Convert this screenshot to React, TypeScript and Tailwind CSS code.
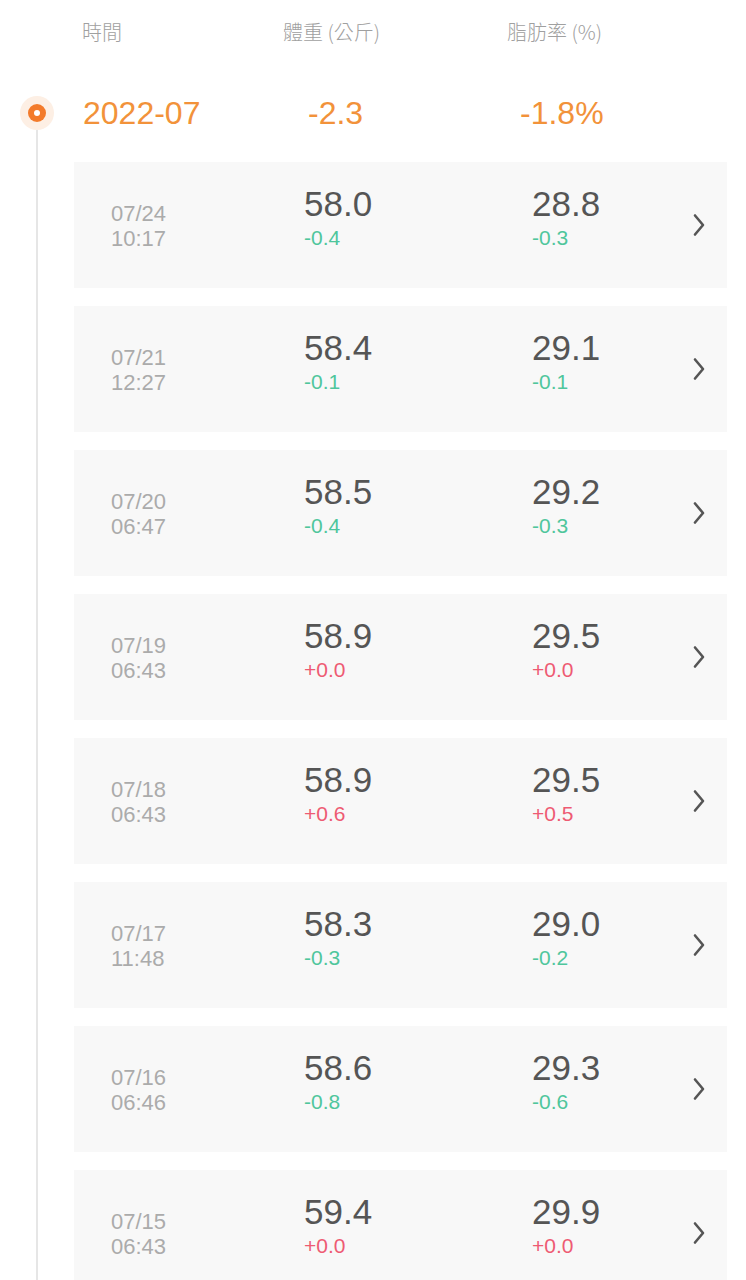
const rows = [
  { date: "07/24", time: "10:17", w: "58.0", dw: "-0.4", f: "28.8", df: "-0.3" },
  { date: "07/21", time: "12:27", w: "58.4", dw: "-0.1", f: "29.1", df: "-0.1" },
  { date: "07/20", time: "06:47", w: "58.5", dw: "-0.4", f: "29.2", df: "-0.3" },
  { date: "07/19", time: "06:43", w: "58.9", dw: "+0.0", f: "29.5", df: "+0.0" },
  { date: "07/18", time: "06:43", w: "58.9", dw: "+0.6", f: "29.5", df: "+0.5" },
  { date: "07/17", time: "11:48", w: "58.3", dw: "-0.3", f: "29.0", df: "-0.2" },
  { date: "07/16", time: "06:46", w: "58.6", dw: "-0.8", f: "29.3", df: "-0.6" },
  { date: "07/15", time: "06:43", w: "59.4", dw: "+0.0", f: "29.9", df: "+0.0" },
];

const font = { fontFamily: '"Liberation Sans", "Noto Sans CJK TC", sans-serif' };
const cjk = { fontFamily: '"Noto Sans CJK TC", sans-serif' };

function Delta({ v }: { v: string }) {
  const up = v.startsWith("+");
  return (
    <div className={`text-[21px] leading-[28px] ${up ? "text-[#ee5b73]" : "text-[#4fc69c]"}`}>{v}</div>
  );
}

function Chevron() {
  return (
    <svg width="12" height="24" viewBox="0 0 12 24" fill="none">
      <polyline points="2,2.5 10,12 2,21.5" stroke="#555" strokeWidth="2.6" strokeLinecap="round" strokeLinejoin="round" />
    </svg>
  );
}

export default function App() {
  return (
    <div className="min-h-[1280px] bg-white overflow-hidden" style={font}>
      {/* column header */}
      <div className="h-[64px] flex items-center text-[20px] text-[#a0a0a0] font-light" style={cjk}>
        <span className="w-[201px] pl-[82px] box-content">時間</span>
        <span className="w-[224px]">體重 (公斤)</span>
        <span>脂肪率 (%)</span>
      </div>

      <div className="flex">
        {/* timeline gutter */}
        <div className="w-[74px] shrink-0 flex flex-col items-center pt-[32px]">
          <div className="w-[34px] h-[34px] rounded-full bg-[#fdefe4] flex items-center justify-center">
            <div className="w-[18px] h-[18px] rounded-full bg-[#f37b2b] flex items-center justify-center">
              <div className="w-[6px] h-[6px] rounded-full bg-white" />
            </div>
          </div>
          <div className="flex-1 w-[2px] bg-[#e6e6e6]" />
        </div>

        <div className="flex-1 pr-[19px]">
          {/* month summary */}
          <div className="h-[98px] flex items-center text-[32px] text-[#f2923a]">
            <span className="w-[234px] pl-[9px] box-border">2022-07</span>
            <span className="w-[212px]">-2.3</span>
            <span>-1.8%</span>
          </div>

          <div className="flex flex-col gap-[18px]">
            {rows.map((r) => (
              <div key={r.date} className="h-[126px] bg-[#f8f8f8] flex items-center pl-[37px] pr-[22px]">
                <div className="w-[193px] text-[22px] leading-[25px] text-[#ababab] -mb-[1px]">
                  <div>{r.date}</div>
                  <div>{r.time}</div>
                </div>
                <div className="w-[228px] -mt-[15px]">
                  <div className="text-[35px] leading-[40px] text-[#555]">{r.w}</div>
                  <Delta v={r.dw} />
                </div>
                <div className="flex-1 -mt-[15px]">
                  <div className="text-[35px] leading-[40px] text-[#555]">{r.f}</div>
                  <Delta v={r.df} />
                </div>
                <Chevron />
              </div>
            ))}
          </div>
        </div>
      </div>
    </div>
  );
}
